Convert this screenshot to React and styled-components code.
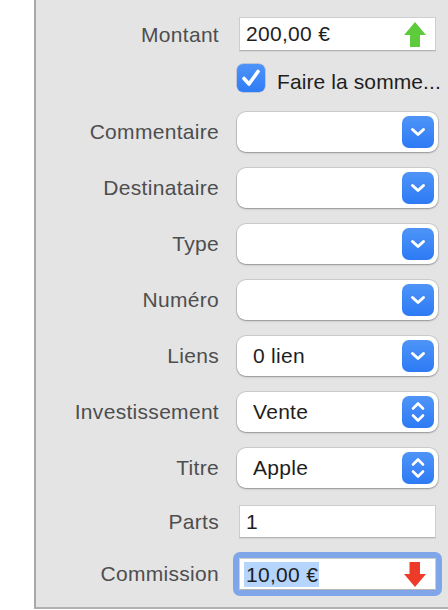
import React from "react";
import styled, { createGlobalStyle } from "styled-components";

const Global = createGlobalStyle`
  html, body { margin: 0; padding: 0; background: #ffffff; }
  body { font-family: "Liberation Sans", Arial, sans-serif; letter-spacing: 0.3px; }
  * { box-sizing: border-box; }
`;

const Page = styled.div`
  display: flex;
  width: 448px;
  height: 610px;
  background: #ffffff;
`;

const Gutter = styled.div`
  width: 34px;
  flex: none;
`;

const Panel = styled.div`
  flex: 1;
  height: 609px;
  background: #e4e4e4;
  border-left: 2px solid #a9a9a9;
  border-bottom: 2px solid #b0b0b0;
  padding-top: 17px;
  display: flex;
  flex-direction: column;
`;

const Row = styled.div`
  display: flex;
  align-items: center;
  gap: 18px;
  height: ${(p) => p.$h}px;
  margin-top: ${(p) => p.$top || 0}px;
`;

const Label = styled.div`
  width: 183px;
  flex: none;
  text-align: right;
  font-size: 21px;
  color: #4e4e4e;
  white-space: nowrap;
  padding-top: ${(p) => p.$shift || 0}px;
`;

const TextField = styled.div`
  width: 197px;
  height: ${(p) => p.$h || 33}px;
  margin-left: ${(p) => (p.$inRing ? 0 : 2)}px;
  background: #ffffff;
  border: 1px solid #cdcdcd;
  border-bottom-color: #b4b4b4;
  box-shadow: ${(p) => (p.$inRing ? "none" : "0 1px 0 rgba(0,0,0,0.06)")};
  display: flex;
  align-items: center;
  justify-content: space-between;
  padding: 0 9px 0 ${(p) => p.$pl || 6}px;
  font-size: 21px;
  color: #1e1e1e;
`;

const FocusRing = styled.div`
  margin-left: -4px;
  width: 209px;
  height: 44px;
  padding: 6px;
  border-radius: 7px;
  background: #80a6ea;
  display: flex;
`;

const Selected = styled.span`
  background: #b5d5fd;
  line-height: 25px;
  padding: 0 1px 0 2px;
`;

const CheckWrap = styled.label`
  display: flex;
  align-items: center;
  gap: 12px;
  font-size: 21px;
  color: #1e1e1e;
  white-space: nowrap;
`;

const CheckBox = styled.span`
  width: 28px;
  height: 28px;
  border-radius: 6px;
  background: linear-gradient(#4d93f8, #2f7cf5);
  box-shadow: 0 0 0 0.5px rgba(0, 60, 160, 0.35);
  display: flex;
  align-items: center;
  justify-content: center;
  flex: none;
`;

const CheckText = styled.span`
  padding-top: 7px;
  letter-spacing: 0.1px;
`;

const Popup = styled.div`
  width: 201px;
  height: 40px;
  border-radius: 9px;
  background: #ffffff;
  box-shadow: 0 0 0 1px rgba(0, 0, 0, 0.1), 0 1px 2px rgba(0, 0, 0, 0.28);
  display: flex;
  align-items: center;
  justify-content: space-between;
  padding: 0 4px 0 16px;
  font-size: 21px;
  color: #1e1e1e;
`;

const PopButton = styled.span`
  width: 32px;
  height: 32px;
  border-radius: 7px;
  background: linear-gradient(#4e94f8, #2d7af5);
  display: flex;
  align-items: center;
  justify-content: center;
  flex: none;
`;

const Chevron = () => (
  <svg width="32" height="32" viewBox="0 0 32 32">
    <polyline
      points="10.5,13.5 16,18.5 21.5,13.5"
      fill="none"
      stroke="#ffffff"
      strokeWidth="3"
      strokeLinecap="round"
      strokeLinejoin="round"
    />
  </svg>
);

const UpDown = () => (
  <svg width="32" height="32" viewBox="0 0 32 32">
    <polyline
      points="11,12.5 16,7.5 21,12.5"
      fill="none"
      stroke="#ffffff"
      strokeWidth="2.6"
      strokeLinecap="round"
      strokeLinejoin="round"
    />
    <polyline
      points="11,19.5 16,24.5 21,19.5"
      fill="none"
      stroke="#ffffff"
      strokeWidth="2.6"
      strokeLinecap="round"
      strokeLinejoin="round"
    />
  </svg>
);

const UpArrow = () => (
  <svg width="22" height="25" viewBox="0 0 22 25">
    <polygon points="11,0 22,13 16,13 16,25 6,25 6,13 0,13" fill="#5dcb3c" />
  </svg>
);

const DownArrow = () => (
  <svg width="22" height="25" viewBox="0 0 22 25">
    <polygon points="5.5,0 16,0 16,12 22,12 11,25 0,12 5.5,12" fill="#ee3a29" />
  </svg>
);

const Check = () => (
  <svg width="28" height="28" viewBox="0 0 28 28">
    <polyline
      points="7,14.5 12,20 21,7.5"
      fill="none"
      stroke="#ffffff"
      strokeWidth="3.6"
      strokeLinecap="round"
      strokeLinejoin="round"
    />
  </svg>
);

const popups = [
  { label: "Commentaire", value: "", kind: "down" },
  { label: "Destinataire", value: "", kind: "down" },
  { label: "Type", value: "", kind: "down" },
  { label: "Numéro", value: "", kind: "down" },
  { label: "Liens", value: "0 lien", kind: "down" },
  { label: "Investissement", value: "Vente", kind: "updown" },
  { label: "Titre", value: "Apple", kind: "updown" },
];

export default function App() {
  return (
    <>
      <Global />
      <Page>
        <Gutter />
        <Panel>
          <Row $h={34}>
            <Label $shift={1}>Montant</Label>
            <TextField $h={34}>
              <span>200,00 €</span>
              <UpArrow />
            </TextField>
          </Row>
          <Row $h={28} $top={13}>
            <Label />
            <CheckWrap>
              <CheckBox>
                <Check />
              </CheckBox>
              <CheckText>Faire la somme...</CheckText>
            </CheckWrap>
          </Row>
          {popups.map((p, i) => (
            <Row key={p.label} $h={40} $top={i === 0 ? 20 : 16}>
              <Label>{p.label}</Label>
              <Popup>
                <span>{p.value}</span>
                <PopButton>{p.kind === "down" ? <Chevron /> : <UpDown />}</PopButton>
              </Popup>
            </Row>
          ))}
          <Row $h={33} $top={17}>
            <Label>Parts</Label>
            <TextField>
              <span>1</span>
            </TextField>
          </Row>
          <Row $h={44} $top={14}>
            <Label>Commission</Label>
            <FocusRing>
              <TextField $inRing $h={32} $pl={4}>
                <Selected>10,00 €</Selected>
                <DownArrow />
              </TextField>
            </FocusRing>
          </Row>
        </Panel>
      </Page>
    </>
  );
}
